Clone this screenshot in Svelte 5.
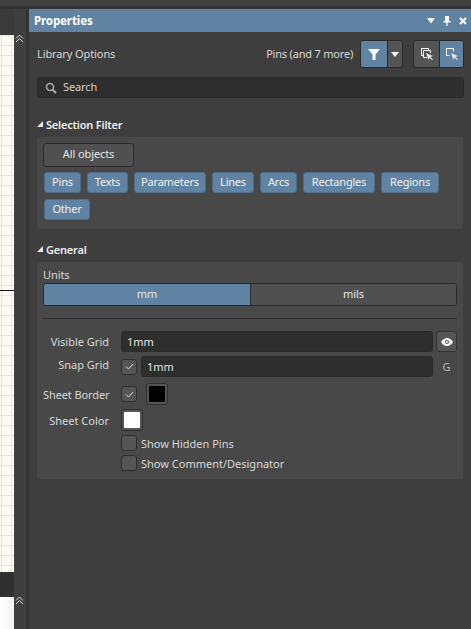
<script>
	// widths taken from the reference, the fallback font runs a little wider
	const filters = [
		{ name: 'Pins', w: 37 },
		{ name: 'Texts', w: 41 },
		{ name: 'Parameters', w: 72 },
		{ name: 'Lines', w: 42 },
		{ name: 'Arcs', w: 37 },
		{ name: 'Rectangles', w: 72 },
		{ name: 'Regions', w: 58 },
		{ name: 'Other', w: 46 }
	];
</script>

<div class="app">
	<div class="topbar"></div>
	<div class="main">
		<div class="left">
			<div class="canvas-col">
				<div class="canvas-top"></div>
				<div class="canvas">
					<div class="pin-line"></div>
				</div>
				<div class="canvas-gap"></div>
				<div class="canvas-white"></div>
			</div>
			<div class="left-strip">
				<svg class="chev chev-top" width="9" height="9" viewBox="0 0 9 9"><path d="M1 4.500 4.500 1 8 4.500M1 8 4.500 4.500 8 8" fill="none" stroke="#d8d8d8" stroke-width="1"/></svg>
				<svg class="chev chev-bottom" width="9" height="9" viewBox="0 0 9 9"><path d="M1 4.500 4.500 1 8 4.500M1 8 4.500 4.500 8 8" fill="none" stroke="#d8d8d8" stroke-width="1"/></svg>
			</div>
			<div class="left-divider"></div>
		</div>

		<div class="panel">
			<div class="title">
				<span class="title-text">Properties</span>
				<div class="title-icons">
					<svg width="8" height="6" viewBox="0 0 8 6"><path d="M0 0h8L4 5.500z" fill="#fff"/></svg>
					<svg width="8" height="10" viewBox="0 0 8 10"><path d="M2 0h4v5h1.500v1.500H4.600V10H3.400V6.500H.5V5H2z" fill="#fff"/></svg>
					<svg width="8" height="8" viewBox="0 0 8 8"><path d="M1 1 7 7M7 1 1 7" stroke="#fff" stroke-width="1.900"/></svg>
				</div>
			</div>

			<div class="options">
				<span class="lib">Library Options</span>
				<span class="pins">Pins (and 7 more)</span>
				<div class="btn-group">
					<div class="seg seg-filter">
						<svg width="12" height="11" viewBox="0 0 12 11"><path d="M0 0h12L7.500 5.500V11h-3V5.500z" fill="#fff"/></svg>
					</div>
					<div class="seg seg-drop">
						<svg width="8" height="5" viewBox="0 0 8 5"><path d="M0 0h8L4 5z" fill="#fff"/></svg>
					</div>
				</div>
				<div class="btn-group group-select">
					<div class="seg seg-sel">
						<svg width="12" height="12" viewBox="0 0 12 12"><path d="M7.500 2.500V.5h-7v7h2M2.500 2.500h7V5M2.500 2.500v7H6" fill="none" stroke="#fff"/><path d="M5 5l7 3-2.500 1 2.500 2.500-1 .5-2.300-2.300L7.500 12z" fill="#e4e4e4"/></svg>
					</div>
					<div class="seg seg-sel on">
						<svg width="12" height="12" viewBox="0 0 12 12"><path d="M7.500 3.500v-3h-7v7h3" fill="none" stroke="#fff"/><path d="M5 5l7 3-2.500 1 2.500 2.500-1 .5-2.300-2.300L7.500 12z" fill="#e4e4e4"/></svg>
					</div>
				</div>
			</div>

			<div class="search">
				<svg width="12" height="12" viewBox="0 0 12 12"><circle cx="5" cy="5" r="3.500" fill="none" stroke="#a8a8a8" stroke-width="1.600"/><path d="M7.500 7.500 11 11" stroke="#a8a8a8" stroke-width="2.200"/></svg>
				<span>Search</span>
			</div>

			<div class="section-head first">
				<svg width="6" height="6" viewBox="0 0 6 6"><path d="M6 0v6H0z" fill="#e6e6e6"/></svg>
				<span>Selection Filter</span>
			</div>
			<div class="card filter-card">
				<div class="all-objects">All objects</div>
				<div class="chips">
					{#each filters as f}
						<div class="chip" style="width: {f.w}px">{f.name}</div>
					{/each}
				</div>
			</div>

			<div class="section-head">
				<svg width="6" height="6" viewBox="0 0 6 6"><path d="M6 0v6H0z" fill="#e6e6e6"/></svg>
				<span>General</span>
			</div>
			<div class="card general-card">
				<div class="units-label">Units</div>
				<div class="units">
					<div class="unit on">mm</div>
					<div class="unit">mils</div>
				</div>
				<div class="rule"></div>

				<div class="form">
					<div class="row row-visible">
						<span class="label">Visible Grid</span>
						<div class="input grow">1mm</div>
						<div class="eye">
							<svg width="12" height="8" viewBox="0 0 12 8"><path d="M0 4C2 1 4 0 6 0s4 1 6 4c-2 3-4 4-6 4S2 7 0 4z" fill="#fff"/><circle cx="6" cy="4" r="2" fill="#555"/><circle cx="6" cy="4" r="1" fill="#fff"/></svg>
						</div>
					</div>
					<div class="row row-snap">
						<span class="label">Snap Grid</span>
						<div class="check"><svg width="9" height="7" viewBox="0 0 9 7"><path d="M1 3.500 3.500 6 8 1" fill="none" stroke="#ddd" stroke-width="1"/></svg></div>
						<div class="input grow">1mm</div>
						<span class="key">G</span>
					</div>
					<div class="row row-border">
						<span class="label">Sheet Border</span>
						<div class="check"><svg width="9" height="7" viewBox="0 0 9 7"><path d="M1 3.500 3.500 6 8 1" fill="none" stroke="#ddd" stroke-width="1"/></svg></div>
						<div class="swatch after-check"><div class="swatch-fill black"></div></div>
					</div>
					<div class="row row-color">
						<span class="label">Sheet Color</span>
						<div class="swatch"><div class="swatch-fill white"></div></div>
					</div>
					<div class="row row-hidden">
						<span class="label"></span>
						<div class="check"></div>
						<span class="check-text">Show Hidden Pins</span>
					</div>
					<div class="row row-comment">
						<span class="label"></span>
						<div class="check"></div>
						<span class="check-text">Show Comment/Designator</span>
					</div>
				</div>
			</div>
		</div>
	</div>
</div>

<style>
	:global(body) {
		margin: 0;
		background: #3e3e3e;
	}

	.app {
		width: 471px;
		height: 629px;
		overflow: hidden;
		display: flex;
		flex-direction: column;
		font-family: "Noto Sans", "Open Sans", sans-serif;
		font-size: 11px;
		letter-spacing: -0.1px;
		color: #dcdcdc;
		background: #3e3e3e;
	}

	.topbar {
		height: 9px;
		background: linear-gradient(#414141 0 6px, #333 6px);
		flex-shrink: 0;
	}

	.main {
		display: flex;
		flex: 1;
		min-height: 0;
	}

	/* ── left edge ──────────────────────────────────────────────── */
	.left {
		width: 29px;
		display: flex;
		flex-shrink: 0;
	}

	.canvas-col {
		width: 14px;
		display: flex;
		flex-direction: column;
	}

	.canvas-top {
		height: 26px;
		background: #3a3a3a;
	}

	.canvas {
		height: 537px;
		position: relative;
		background-color: #fdfaf3;
		background-image:
			repeating-linear-gradient(90deg, transparent 0 1px, #e8e5d6 1px 2px, transparent 2px 10px),
			repeating-linear-gradient(180deg, #e8e5d6 0 1px, transparent 1px 10px);
	}

	.pin-line {
		position: absolute;
		left: 0;
		right: 0;
		top: 255px;
		height: 1px;
		background: #111;
	}

	.canvas-gap {
		height: 25px;
		background: #303030;
	}

	.canvas-white {
		flex: 1;
		background: linear-gradient(90deg, #fff, #f2f2f2);
	}

	.left-strip {
		width: 12px;
		position: relative;
		background: #3f3f3f;
	}

	.chev {
		position: absolute;
		left: 1px;
		display: block;
	}

	.chev-top {
		top: 25px;
	}

	.chev-bottom {
		top: 587px;
	}

	.left-divider {
		width: 3px;
		background: #343434;
	}

	/* ── panel ──────────────────────────────────────────────────── */
	.panel {
		flex: 1;
		min-width: 0;
		background: #3e3e3e;
	}

	.title {
		height: 23px;
		background: #6083a3;
		display: flex;
		align-items: center;
		justify-content: space-between;
		padding: 0 4px 0 5px;
	}

	.title-text {
		font-size: 11.5px;
		font-weight: 700;
		color: #fff;
		padding-bottom: 1px;
	}

	.title-icons {
		display: flex;
		align-items: center;
		gap: 8px;
	}

	.title-icons svg {
		display: block;
	}

	.options {
		display: flex;
		align-items: center;
		height: 28px;
		margin-top: 8px;
		padding: 0 7px 0 8px;
	}

	.lib {
		flex: 1;
		color: #d8d8d8;
		padding-bottom: 1px;
	}

	.pins {
		margin-right: 7px;
		color: #d8d8d8;
		letter-spacing: -0.2px;
		padding-bottom: 1px;
	}

	.btn-group {
		display: flex;
		height: 28px;
		box-sizing: border-box;
		border: 1px solid #2a2a2a;
		border-radius: 3px;
		overflow: hidden;
	}

	.group-select {
		margin-left: 10px;
	}

	.seg {
		display: flex;
		align-items: center;
		justify-content: center;
		background: #545454;
		box-sizing: border-box;
	}

	.seg-filter {
		width: 27px;
		background: #6083a3;
		border-right: 1px solid #2a2a2a;
	}

	.seg-drop {
		width: 14px;
	}

	.seg-sel {
		width: 25px;
	}

	.seg-sel.on {
		width: 24px;
		background: #6083a3;
		border-left: 1px solid #2a2a2a;
	}

	.search {
		display: flex;
		align-items: center;
		gap: 6px;
		height: 21px;
		box-sizing: border-box;
		margin: 9px 7px 0 8px;
		padding-left: 7px;
		background: #2e2e2e;
		border: 1px solid #282828;
		border-radius: 3px;
		color: #d0d0d0;
	}

	.search span {
		padding-bottom: 2px;
	}

	.section-head {
		display: flex;
		align-items: center;
		gap: 3px;
		height: 16px;
		margin: 12px 0 0 8px;
		font-weight: 600;
		letter-spacing: -0.2px;
		color: #eee;
	}

	.section-head.first {
		margin-top: 18px;
	}

	.card {
		background: #484848;
		border-radius: 3px;
		margin: 5px 8px 0;
		box-sizing: border-box;
	}

	.filter-card {
		height: 92px;
		padding: 6px 6px 0;
	}

	.all-objects {
		width: 91px;
		height: 24px;
		box-sizing: border-box;
		display: flex;
		align-items: center;
		justify-content: center;
		padding-bottom: 3px;
		background: #505050;
		border: 1px solid #2a2a2a;
		border-radius: 3px;
		color: #e6e6e6;
	}

	.chips {
		display: flex;
		flex-wrap: wrap;
		gap: 6px;
		margin-top: 5px;
		padding-left: 1px;
	}

	.chip {
		height: 21px;
		box-sizing: border-box;
		display: flex;
		align-items: center;
		justify-content: center;
		padding-bottom: 2px;
		background: #6083a3;
		border: 1px solid #4f6b86;
		border-radius: 3px;
		color: #f0f0f0;
		letter-spacing: -0.2px;
	}

	.general-card {
		height: 217px;
		padding: 5px 6px 0;
	}

	.units-label {
		height: 15px;
		line-height: 15px;
		color: #d8d8d8;
	}

	.units {
		display: flex;
		height: 23px;
		box-sizing: border-box;
		border: 1px solid #2a2a2a;
		border-radius: 3px;
		overflow: hidden;
		margin-top: 1px;
	}

	.unit {
		flex: 1;
		display: flex;
		align-items: center;
		justify-content: center;
		padding-bottom: 2px;
		background: #505050;
		color: #e6e6e6;
	}

	.unit.on {
		background: #6083a3;
		border-right: 1px solid #2a2a2a;
		flex: 0 0 206px;
	}

	.rule {
		height: 1px;
		background: #2e2e2e;
		margin-top: 12px;
	}

	.form {
		margin-top: 12px;
	}

	.row {
		display: flex;
		align-items: center;
		gap: 4px;
	}

	.row-visible { height: 21px; }
	.row-snap { height: 21px; margin-top: 4px; }
	.row-border { height: 22px; margin-top: 6px; }
	.row-color { height: 22px; margin-top: 4px; }
	.row-hidden { height: 16px; margin-top: 4px; }
	.row-comment { height: 16px; margin-top: 4px; }

	.label {
		width: 66px;
		text-align: right;
		margin-right: 8px;
		color: #d8d8d8;
		letter-spacing: 0;
		flex-shrink: 0;
		white-space: nowrap;
	}

	.row-border .label {
		letter-spacing: -0.1px;
	}

	.row-snap .label {
		padding-bottom: 4px;
	}

	.input {
		height: 21px;
		box-sizing: border-box;
		padding-left: 5px;
		display: flex;
		align-items: center;
		background: #2e2e2e;
		border: 1px solid #2a2a2a;
		border-radius: 3px;
		color: #e6e6e6;
	}

	.grow {
		flex: 1;
	}

	.eye {
		width: 21px;
		height: 21px;
		box-sizing: border-box;
		margin-left: -1px;
		display: flex;
		align-items: center;
		justify-content: center;
		background: #555;
		border: 1px solid #333;
		border-radius: 3px;
	}

	.key {
		width: 21px;
		text-align: center;
		margin-left: -1px;
		color: #b8b8b8;
	}

	.check {
		width: 16px;
		height: 16px;
		box-sizing: border-box;
		display: flex;
		align-items: center;
		justify-content: center;
		background: #555;
		border: 1px solid #2e2e2e;
		border-radius: 3px;
		flex-shrink: 0;
	}

	.swatch {
		width: 22px;
		height: 22px;
		box-sizing: border-box;
		padding: 2px;
		background: #555;
		border: 1px solid #2e2e2e;
		border-radius: 3px;
	}

	.after-check {
		margin-left: 5px;
	}

	.swatch-fill {
		width: 100%;
		height: 100%;
		border-radius: 1px;
	}

	.black { background: #000; }
	.white { background: #fff; }

	.check-text {
		color: #d8d8d8;
		letter-spacing: 0;
	}
</style>
